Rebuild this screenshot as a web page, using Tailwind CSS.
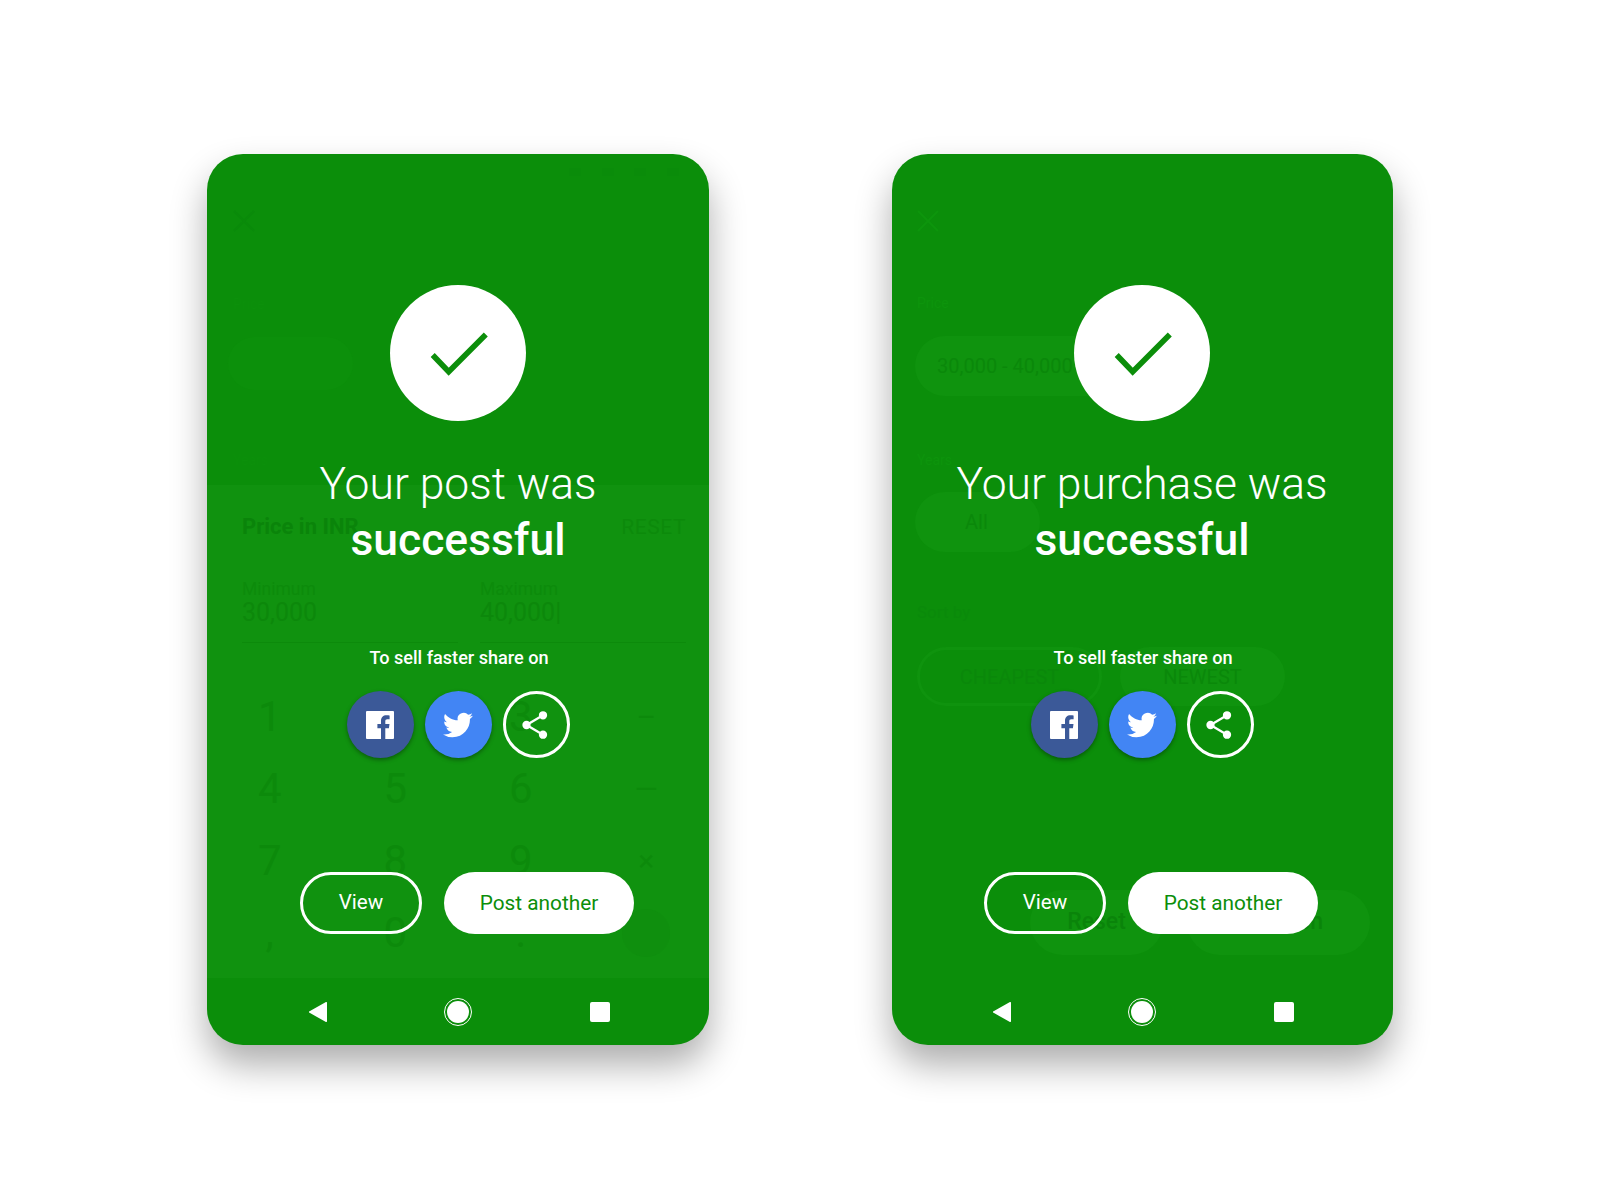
<!DOCTYPE html>
<html lang="en">
<head>
  <meta charset="UTF-8" />
  <title>Success screens</title>
  <script src="https://cdn.jsdelivr.net/npm/@tailwindcss/browser@4"></script>
</head>
<body class="bg-white font-['Roboto',sans-serif]">
  <div class="w-[1600px] h-[1200px] pt-[154px] pl-[207px] flex gap-[183px]">

    <!-- Post -->
    <section class="relative w-[502px] h-[891px] rounded-[36px] bg-[#0b8e0a] shadow-[0_20px_36px_rgba(0,0,0,0.32)] overflow-hidden flex flex-col items-center text-white">
      <!-- dimmed screen behind -->
      <div class="absolute inset-0 flex flex-col text-[#0a840a]">
        <div class="h-[331px] shrink-0 relative">
          <svg class="absolute left-[26px] top-[56px]" width="22" height="22" viewBox="0 0 22 22" fill="none" stroke="#0a8a0a" stroke-width="2"><path d="M1 1l20 20M21 1L1 21"/></svg>
          <div class="absolute right-[30px] top-[14px] w-[110px] h-[10px] flex justify-between"><span class="w-3 h-2 bg-[#0a8c0a]"></span><span class="w-3 h-2 bg-[#0a8c0a]"></span><span class="w-3 h-2 bg-[#0a8c0a]"></span><span class="w-3 h-2 bg-[#0a8c0a]"></span></div>
          <p class="absolute left-[26px] top-[140px] text-[14px] text-[#0c900b]">Price</p>
          <div class="absolute left-[21px] top-[183px] w-[125px] h-[53px] rounded-full bg-[#0c900b]"></div>
          <p class="absolute left-[26px] top-[296px] text-[14px] text-[#0c900b]">Years</p>
        </div>
        <div class="h-[493px] shrink-0 overflow-hidden bg-[#10920f] pl-[35px] pr-[23px] pt-[29px]">
          <div class="flex justify-between items-center">
            <p class="text-[22px] font-bold leading-[26px]">Price in INR</p>
            <p class="text-[21px] leading-[26px] tracking-wide text-[#0c8a0b]">RESET</p>
          </div>
          <div class="grid grid-cols-[216px_206px] gap-x-[22px] mt-[39px]">
            <div class="border-b border-[#0c8a0b] h-[64px]">
              <p class="text-[17.500px] leading-5 text-[#0c8b0b]">Minimum</p>
              <p class="text-[25px] leading-8 -mt-[2px] text-[#0c880b]">30,000</p>
            </div>
            <div class="border-b border-[#0c8a0b] h-[64px]">
              <p class="text-[17.500px] leading-5 text-[#0c8b0b]">Maximum</p>
              <p class="text-[25px] leading-8 -mt-[2px] text-[#0c880b]">40,000|</p>
            </div>
          </div>
          <div class="grid grid-cols-4 mt-[38px] -ml-[35px] -mr-[23px] text-[42px] text-[#0c8a0b] leading-[72px] text-center">
            <span>1</span><span>2</span><span>3</span><span class="text-[30px]">–</span>
            <span>4</span><span>5</span><span>6</span><span class="text-[30px]">—</span>
            <span>7</span><span>8</span><span>9</span><span class="text-[30px]">×</span>
            <span>,</span><span>0</span><span>.</span><span class="flex justify-center items-center"><i class="block w-12 h-12 rounded-full bg-[#0f8f0e]"></i></span>
          </div>
        </div>
      </div>

      <div class="relative flex flex-col items-center w-full grow">
        <div class="mt-[131px] w-[136px] h-[136px] rounded-full bg-white">
          <svg width="136" height="136" viewBox="0 0 136 136" fill="none" stroke="#0b8e0a" stroke-width="5.600"><path d="M42.700 70l16 16.800 37.100-37.300"/></svg>
        </div>
        <h1 class="mt-[35px] text-[44.400px] leading-[56px] font-light text-center">Your post was<br /><b class="font-medium">successful</b></h1>
        <p class="mt-[78px] ml-[2px] text-[18.100px] leading-6 font-medium">To sell faster share on</p>
        <div class="mt-[21px] flex gap-[11px]">
          <div class="w-[67px] h-[67px] rounded-full bg-[#3b5998] shadow-[0_2px_4px_rgba(0,0,0,0.35)] flex items-center justify-center">
            <svg width="28" height="28" viewBox="0 0 28 28"><path fill="#fff" d="M1 0h26a1 1 0 0 1 1 1v26a1 1 0 0 1-1 1h-7.700V17.200h3.600l.6-4.200h-4.200v-2.700c0-1.200.4-2 2.100-2h2.200V4.500c-.4-.1-1.700-.2-3.200-.2-3.200 0-5.400 2-5.400 5.500V13h-3.600v4.200h3.600V28H1a1 1 0 0 1-1-1V1a1 1 0 0 1 1-1z"/></svg>
          </div>
          <div class="w-[67px] h-[67px] rounded-full bg-[#4285f4] shadow-[0_2px_4px_rgba(0,0,0,0.35)] flex items-center justify-center">
            <svg width="30" height="30" viewBox="0 0 24 24"><path fill="#fff" d="M23.950 4.570a10 10 0 0 1-2.820.770 4.960 4.960 0 0 0 2.160-2.720c-.950.550-2 .950-3.130 1.180a4.920 4.920 0 0 0-8.380 4.480C7.690 8.090 4.070 6.130 1.640 3.160a4.820 4.820 0 0 0-.670 2.480c0 1.710.870 3.210 2.190 4.100a4.900 4.900 0 0 1-2.230-.620v.060a4.920 4.920 0 0 0 3.950 4.830 5 5 0 0 1-2.210.080 4.940 4.940 0 0 0 4.600 3.420A9.870 9.870 0 0 1 0 19.540a14 14 0 0 0 7.560 2.210c9.050 0 14-7.500 14-13.980 0-.210 0-.420-.020-.630a9.940 9.940 0 0 0 2.410-2.570z"/></svg>
          </div>
          <div class="w-[67px] h-[67px] rounded-full border-[3px] border-white flex items-center justify-center">
            <svg width="28" height="30" viewBox="0 0 28 30" fill="#fff" stroke="#fff" stroke-width="2.300"><path d="M21 5.300L4.500 15 21 24.700" fill="none"/><circle cx="21" cy="5.300" r="3"/><circle cx="4.500" cy="15" r="3"/><circle cx="21" cy="24.700" r="3"/></svg>
          </div>
        </div>
        <div class="mt-[114px] ml-[18px] flex gap-[22px]">
          <button class="w-[122px] h-[62px] pb-[1px] rounded-full border-[3px] border-white text-[20.600px]">View</button>
          <button class="w-[190px] h-[62px] pt-[1px] rounded-full bg-white text-[20.800px] text-[#0b8e0a]">Post another</button>
        </div>
      </div>

      <nav class="relative h-[67px] w-full flex items-center justify-center shrink-0 pl-[3px]">
        <svg class="mr-[115px]" width="20" height="20" viewBox="0 0 20 20"><path fill="#fff" d="M18 1v18a1 1 0 0 1-1.500.800L1 11a1 1 0 0 1 0-2L16.500.200A1 1 0 0 1 18 1z"/></svg>
        <div class="w-[28px] h-[28px] rounded-full border border-white p-[2px]"><div class="w-full h-full rounded-full bg-white"></div></div>
        <div class="ml-[118px] w-[20px] h-[20px] rounded-[2px] bg-white"></div>
      </nav>
    </section>

    <!-- Purchase -->
    <section class="relative w-[501px] h-[891px] rounded-[36px] bg-[#0b8e0a] shadow-[0_20px_36px_rgba(0,0,0,0.32)] overflow-hidden flex flex-col items-center text-white">
      <!-- dimmed screen behind -->
      <div class="absolute inset-0 text-[#0a880a]">
        <svg class="absolute left-[25px] top-[56px]" width="22" height="22" viewBox="0 0 22 22" fill="none" stroke="#0d950c" stroke-width="2"><path d="M1 1l20 20M21 1L1 21"/></svg>
        <div class="ml-[23px] pt-[141px]">
          <p class="ml-[2px] text-[14px] leading-4 text-[#0d940c]">Price</p>
          <div class="mt-[25px] w-[240px] h-[60px] rounded-full bg-[#0f930e] flex items-center pl-[22px] text-[20px]">30,000 - 40,000</div>
          <p class="ml-[2px] mt-[56px] text-[14px] leading-4 text-[#0d940c]">Years</p>
          <div class="mt-[24px] w-[125px] h-[60px] rounded-full bg-[#0f930e] flex items-center pl-[50px] text-[20px]">All</div>
          <p class="ml-[2px] mt-[50px] text-[17px] leading-5 text-[#0a8a0a]">Sort by</p>
          <div class="mt-[25px] flex gap-[18px] ml-[2px] text-[20px]">
            <div class="w-[185px] h-[59px] rounded-full border-[3px] border-[#0f930e] flex items-center justify-center">CHEAPEST</div>
            <div class="w-[165px] h-[59px] rounded-full bg-[#0f930e] flex items-center justify-center">NEWEST</div>
          </div>
        </div>
        <div class="mt-[184px] ml-[138px] flex gap-[24px] text-[23px] font-medium text-[#0a840a]">
          <div class="w-[133px] h-[65px] rounded-full bg-[#0f930e] flex items-center justify-center">Reset</div>
          <div class="w-[183px] h-[65px] rounded-full bg-[#0f930e] flex items-center justify-end pr-[47px]">Search</div>
        </div>
      </div>

      <div class="relative flex flex-col items-center w-full grow pr-px">
        <div class="mt-[131px] w-[136px] h-[136px] rounded-full bg-white">
          <svg width="136" height="136" viewBox="0 0 136 136" fill="none" stroke="#0b8e0a" stroke-width="5.600"><path d="M42.700 70l16 16.800 37.100-37.300"/></svg>
        </div>
        <h1 class="mt-[35px] text-[44.400px] leading-[56px] font-light text-center">Your purchase was<br /><b class="font-medium">successful</b></h1>
        <p class="mt-[78px] ml-[2px] text-[18.100px] leading-6 font-medium">To sell faster share on</p>
        <div class="mt-[21px] flex gap-[11px]">
          <div class="w-[67px] h-[67px] rounded-full bg-[#3b5998] shadow-[0_2px_4px_rgba(0,0,0,0.35)] flex items-center justify-center">
            <svg width="28" height="28" viewBox="0 0 28 28"><path fill="#fff" d="M1 0h26a1 1 0 0 1 1 1v26a1 1 0 0 1-1 1h-7.700V17.200h3.600l.6-4.200h-4.200v-2.700c0-1.200.4-2 2.100-2h2.200V4.500c-.4-.1-1.700-.2-3.200-.2-3.200 0-5.400 2-5.400 5.500V13h-3.600v4.200h3.600V28H1a1 1 0 0 1-1-1V1a1 1 0 0 1 1-1z"/></svg>
          </div>
          <div class="w-[67px] h-[67px] rounded-full bg-[#4285f4] shadow-[0_2px_4px_rgba(0,0,0,0.35)] flex items-center justify-center">
            <svg width="30" height="30" viewBox="0 0 24 24"><path fill="#fff" d="M23.950 4.570a10 10 0 0 1-2.820.770 4.960 4.960 0 0 0 2.160-2.720c-.950.550-2 .950-3.130 1.180a4.920 4.920 0 0 0-8.380 4.480C7.690 8.090 4.070 6.130 1.640 3.160a4.820 4.820 0 0 0-.670 2.480c0 1.710.870 3.210 2.190 4.100a4.900 4.900 0 0 1-2.230-.620v.060a4.920 4.920 0 0 0 3.950 4.830 5 5 0 0 1-2.210.080 4.940 4.940 0 0 0 4.600 3.420A9.870 9.870 0 0 1 0 19.540a14 14 0 0 0 7.560 2.210c9.050 0 14-7.500 14-13.980 0-.210 0-.420-.020-.630a9.940 9.940 0 0 0 2.410-2.570z"/></svg>
          </div>
          <div class="w-[67px] h-[67px] rounded-full border-[3px] border-white flex items-center justify-center">
            <svg width="28" height="30" viewBox="0 0 28 30" fill="#fff" stroke="#fff" stroke-width="2.300"><path d="M21 5.300L4.500 15 21 24.700" fill="none"/><circle cx="21" cy="5.300" r="3"/><circle cx="4.500" cy="15" r="3"/><circle cx="21" cy="24.700" r="3"/></svg>
          </div>
        </div>
        <div class="mt-[114px] ml-[18px] flex gap-[22px]">
          <button class="w-[122px] h-[62px] pb-[1px] rounded-full border-[3px] border-white text-[20.600px]">View</button>
          <button class="w-[190px] h-[62px] pt-[1px] rounded-full bg-white text-[20.800px] text-[#0b8e0a]">Post another</button>
        </div>
      </div>

      <nav class="relative h-[67px] w-full flex items-center justify-center shrink-0 pl-[2px]">
        <svg class="mr-[115px]" width="20" height="20" viewBox="0 0 20 20"><path fill="#fff" d="M18 1v18a1 1 0 0 1-1.500.800L1 11a1 1 0 0 1 0-2L16.500.200A1 1 0 0 1 18 1z"/></svg>
        <div class="w-[28px] h-[28px] rounded-full border border-white p-[2px]"><div class="w-full h-full rounded-full bg-white"></div></div>
        <div class="ml-[118px] w-[20px] h-[20px] rounded-[2px] bg-white"></div>
      </nav>
    </section>

  </div>
</body>
</html>
